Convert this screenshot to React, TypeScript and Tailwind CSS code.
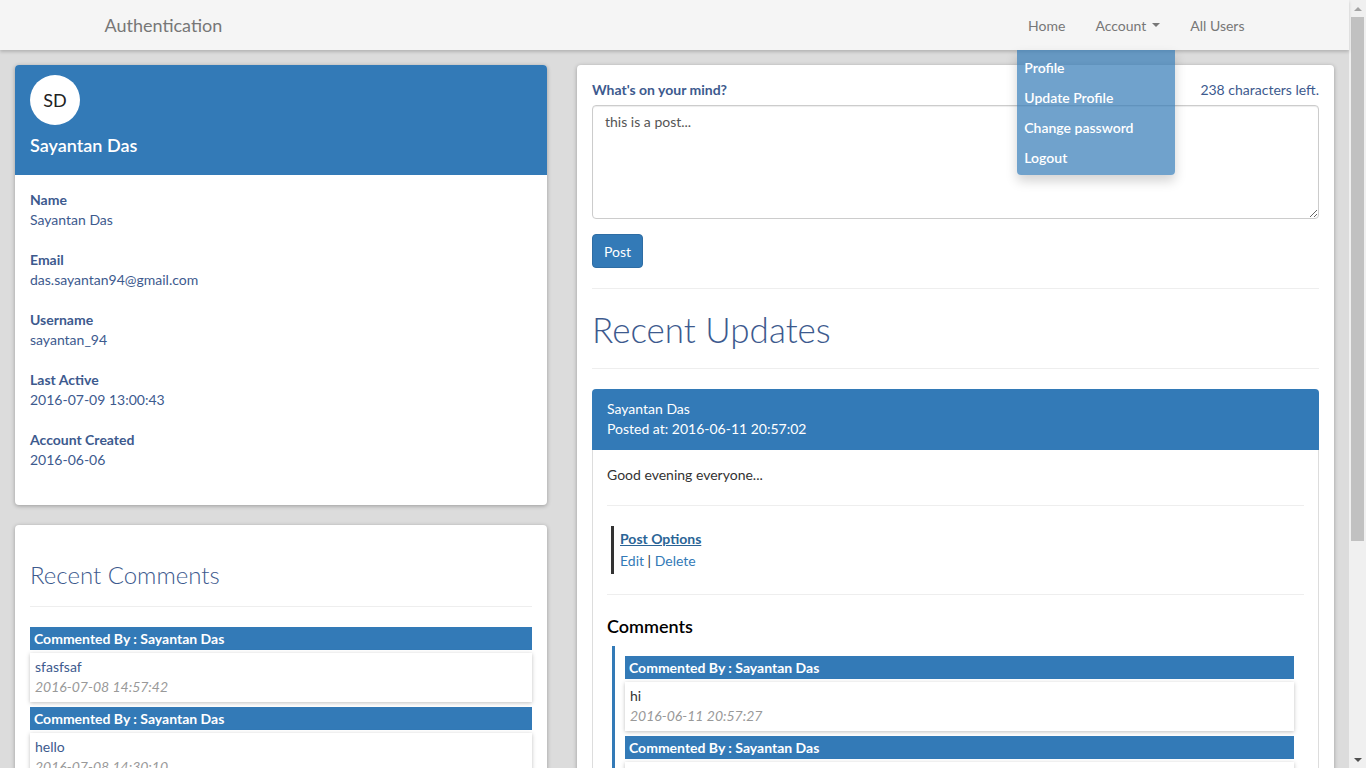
import React from 'react';

const PROFILE = [
    { label: 'Name', value: 'Sayantan Das' },
    { label: 'Email', value: 'das.sayantan94@gmail.com' },
    { label: 'Username', value: 'sayantan_94' },
    { label: 'Last Active', value: '2016-07-09 13:00:43' },
    { label: 'Account Created', value: '2016-06-06' },
];

const RECENT = [
    { text: 'sfasfsaf', at: '2016-07-08 14:57:42' },
    { text: 'hello', at: '2016-07-08 14:30:10' },
];

const POST_COMMENTS = [
    { text: 'hi', at: '2016-06-11 20:57:27' },
    { text: 'nice', at: '2016-06-11 20:58:03' },
];

const Comment = ({ text, at, tone }: { text: string; at: string; tone: string }) => (
    <div>
        <div className="bg-[#337ab7] text-white font-bold text-[14px] leading-[23px] px-[4px]">
            Commented By : Sayantan Das
        </div>
        <div className={`mt-[3px] mb-[5px] bg-white px-[5px] pt-[4px] pb-[5px] shadow-[0_1px_4px_rgba(0,0,0,0.25)] ${tone}`}>
            <div className="leading-[20px] text-[14px]">{text}</div>
            <div className="leading-[20px] text-[14px] italic text-[#999]">{at}</div>
        </div>
    </div>
);

export default function App() {
    return (
        <div className="w-[1366px] h-[768px] flex overflow-hidden bg-[#dcdcdc] font-['Lato','Open_Sans',sans-serif] text-[14px] text-[#3d5a8e]">
            <div className="w-[1349px] flex flex-col">
                {/* navbar */}
                <nav className="relative z-20 h-[50px] shrink-0 bg-[#f5f5f5] shadow-[0_2px_3px_rgba(0,0,0,0.18)]">
                    <div className="mx-auto w-[1170px] h-full px-[15px] flex items-center justify-between">
                        <span className="text-[18px] text-[#777]">Authentication</span>
                        <ul className="flex h-full items-center -mr-[15px] text-[#777] text-[14px]">
                            <li className="px-[15px]">Home</li>
                            <li className="relative px-[15px] h-full flex items-center">
                                Account
                                <span className="ml-[6px] inline-block w-0 h-0 border-x-[4px] border-x-transparent border-t-[4px] border-t-[#777]" />
                                <div className="absolute right-0 top-full w-[158px] bg-[rgba(51,122,183,0.7)] rounded-b-[4px] pt-[3px] pb-[2px] shadow-[0_6px_12px_rgba(0,0,0,0.175)] text-white font-semibold">
                                    {['Profile', 'Update Profile', 'Change password', 'Logout'].map((item) => (
                                        <div key={item} className="h-[30px] leading-[30px] px-[7px]">{item}</div>
                                    ))}
                                </div>
                            </li>
                            <li className="px-[15px]">All Users</li>
                        </ul>
                    </div>
                </nav>

                {/* content */}
                <div className="flex gap-[30px] px-[15px] pt-[15px]">
                    {/* left column */}
                    <div className="w-[532px] shrink-0 flex flex-col gap-[20px]">
                        <div className="bg-white rounded-[4px] shadow-[0_1px_4px_rgba(0,0,0,0.3)]">
                            <div className="bg-[#337ab7] rounded-t-[4px] px-[15px] pt-[10px] pb-[17px]">
                                <div className="w-[50px] h-[50px] rounded-full bg-white flex items-center justify-center text-[18px] text-[#222]">
                                    SD
                                </div>
                                <div className="mt-[7px] text-[18px] leading-[26px] font-semibold text-white">Sayantan Das</div>
                            </div>
                            <div className="px-[15px] pt-[15px] pb-[15px]">
                                {PROFILE.map((row) => (
                                    <div key={row.label} className="mb-[20px] leading-[20px]">
                                        <div className="font-bold">{row.label}</div>
                                        <div>{row.value}</div>
                                    </div>
                                ))}
                            </div>
                        </div>

                        <div className="bg-white rounded-[4px] shadow-[0_1px_4px_rgba(0,0,0,0.3)] px-[15px] pt-[37px] pb-[10px]">
                            <h2 className="text-[24px] leading-[26px] font-light">Recent Comments</h2>
                            <hr className="mt-[18px] mb-[20px] border-t border-[#eee]" />
                            {RECENT.map((c) => (
                                <Comment key={c.at} text={c.text} at={c.at} tone="text-[#3d5a8e]" />
                            ))}
                        </div>
                    </div>

                    {/* right column */}
                    <div className="flex-1 bg-white rounded-[4px] shadow-[0_1px_4px_rgba(0,0,0,0.3)] px-[15px] pt-[15px] pb-[15px]">
                        <div className="flex justify-between leading-[20px]">
                            <span className="font-bold">What's on your mind?</span>
                            <span>238 characters left.</span>
                        </div>
                        <textarea
                            defaultValue="this is a post..."
                            className="mt-[5px] block w-full h-[114px] border border-[#ccc] rounded-[4px] px-[12px] py-[6px] text-[#555] text-[14px] leading-[20px] outline-none shadow-[inset_0_1px_1px_rgba(0,0,0,0.075)]"
                        />
                        <button className="mt-[15px] h-[34px] px-[11px] bg-[#337ab7] border border-[#2e6da4] rounded-[4px] text-white text-[14px]">
                            Post
                        </button>
                        <hr className="mt-[20px] border-t border-[#eee]" />
                        <h1 className="mt-[20px] text-[35px] leading-[40px] font-light">Recent Updates</h1>
                        <hr className="mt-[19px] border-t border-[#eee]" />

                        <div className="mt-[20px] rounded-t-[4px]">
                            <div className="bg-[#337ab7] rounded-t-[4px] px-[15px] py-[10px] text-white leading-[20px] h-[61px]">
                                <div>Sayantan Das</div>
                                <div>Posted at: 2016-06-11 20:57:02</div>
                            </div>
                            <div className="border-x border-[#ddd] px-[14px] pt-[15px]">
                                <div className="leading-[20px] text-[#333]">Good evening everyone...</div>
                                <hr className="mt-[20px] border-t border-[#eee]" />
                                <div className="mt-[20px] ml-[4px] border-l-[3px] border-[#333] pl-[6px] py-[2px] leading-[22px]">
                                    <div className="font-bold text-[#2a6496] underline">Post Options</div>
                                    <div className="text-[#333]">
                                        <span className="text-[#337ab7]">Edit</span> | <span className="text-[#337ab7]">Delete</span>
                                    </div>
                                </div>
                                <hr className="mt-[20px] border-t border-[#eee]" />
                                <h3 className="mt-[19px] text-[18px] leading-[24px] font-semibold text-black">Comments</h3>
                                <div className="mt-[8px] ml-[5px] border-l-[3px] border-[#337ab7] pl-[10px] pr-[10px] pt-[10px]">
                                    {POST_COMMENTS.map((c) => (
                                        <Comment key={c.at} text={c.text} at={c.at} tone="text-[#333]" />
                                    ))}
                                </div>
                            </div>
                        </div>
                    </div>
                </div>
            </div>

            {/* scrollbar */}
            <div className="w-[17px] shrink-0 bg-[#f0f0f0] flex flex-col">
                <div className="h-[17px] flex items-center justify-center">
                    <span className="w-0 h-0 border-x-[4px] border-x-transparent border-b-[4px] border-b-[#a3a3a3]" />
                </div>
                <div className="h-[524px] mx-[2px] bg-[#c1c1c1]" />
                <div className="flex-1" />
                <div className="h-[17px] flex items-center justify-center">
                    <span className="w-0 h-0 border-x-[4px] border-x-transparent border-t-[4px] border-t-[#505050]" />
                </div>
            </div>
        </div>
    );
}
